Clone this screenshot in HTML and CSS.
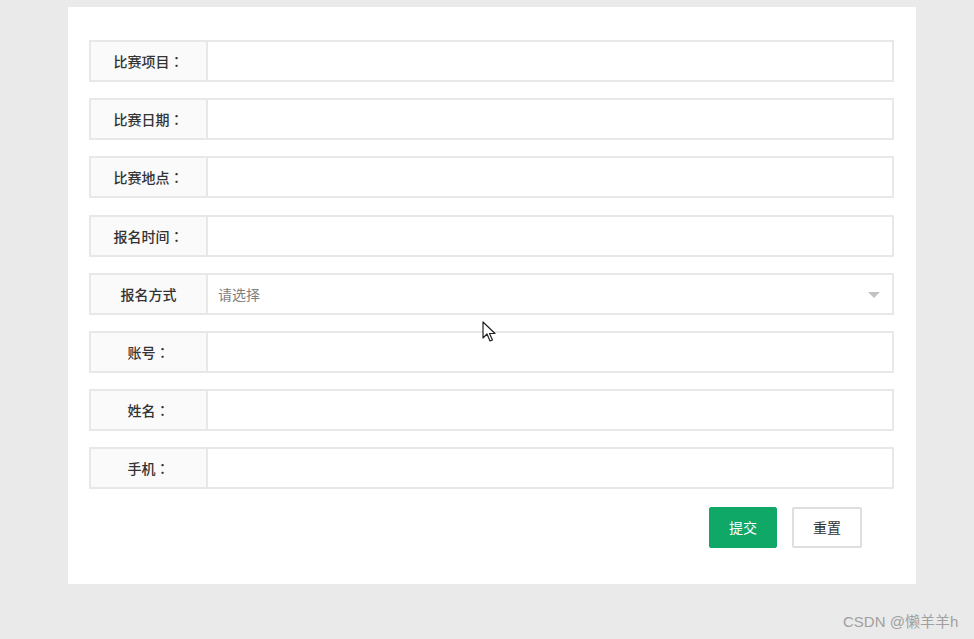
FILE: index.html
```html
<!DOCTYPE html>
<html lang="zh">
<head>
<meta charset="utf-8">
<link rel="stylesheet" href="styles.css">
</head>
<body>
<div class="panel">
  <form class="form">
    <div class="row"><label class="label">比赛项目<span class="colon">：</span></label><div class="field"></div></div>
    <div class="row"><label class="label">比赛日期<span class="colon">：</span></label><div class="field"></div></div>
    <div class="row"><label class="label">比赛地点<span class="colon">：</span></label><div class="field"></div></div>
    <div class="row"><label class="label">报名时间<span class="colon">：</span></label><div class="field"></div></div>
    <div class="row"><label class="label">报名方式</label><div class="field select"><span class="placeholder">请选择</span><span class="arrow"></span></div></div>
    <div class="row"><label class="label">账号<span class="colon">：</span></label><div class="field"></div></div>
    <div class="row"><label class="label">姓名<span class="colon">：</span></label><div class="field"></div></div>
    <div class="row"><label class="label">手机<span class="colon">：</span></label><div class="field"></div></div>
    <div class="actions">
      <button type="button" class="btn btn-primary">提交</button>
      <button type="button" class="btn btn-default">重置</button>
    </div>
  </form>
  <svg class="cursor" width="14" height="22" viewBox="0 0 14 22"><path d="M1 1 L1 17 L5 13 L8 20 L10.5 19 L7.5 12.5 L13 12.5 Z" fill="#fff" stroke="#222" stroke-width="1.2" stroke-linejoin="round"/></svg>
</div>
<div class="watermark">CSDN @懒羊羊h</div>
</body>
</html>
```

FILE: styles.css
```css
html, body {
  margin: 0;
  padding: 0;
  background: #eaeaea;
  font-family: "Noto Sans CJK SC", "Liberation Sans", sans-serif;
}
body {
  width: 974px;
  height: 639px;
  overflow: hidden;
  position: relative;
}
.panel {
  position: relative;
  margin: 7px 0 0 68px;
  width: 848px;
  height: 577px;
  background: #fff;
  box-sizing: border-box;
  padding: 33px 22px 0 21px;
}
.form {
  display: flex;
  flex-direction: column;
  gap: 16.2px;
}
.row {
  display: flex;
  height: 42px;
  box-sizing: border-box;
  border: 2px solid #e8e8e8;
}
.label {
  width: 115px;
  flex: none;
  background: #fafafa;
  border-right: 2px solid #e8e8e8;
  display: flex;
  align-items: center;
  justify-content: center;
  font-size: 14px;
  font-weight: 500;
  color: #333;
}
.colon {
  font-family: "Noto Sans CJK TC", sans-serif;
}
.field {
  flex: 1;
  background: #fff;
}
.select {
  display: flex;
  align-items: center;
  justify-content: space-between;
  padding: 0 12px 0 10px;
}
.placeholder {
  font-size: 14px;
  color: #7f7f7f;
}
.arrow {
  width: 0;
  height: 0;
  border-left: 6px solid transparent;
  border-right: 6px solid transparent;
  border-top: 6px solid #c2c2c2;
  margin-top: 2px;
}
.actions {
  display: flex;
  justify-content: flex-end;
  gap: 15px;
  padding-right: 32px;
  margin-top: 1px;
}
.btn {
  height: 41px;
  width: 68px;
  font-family: inherit;
  font-size: 14px;
  border-radius: 2px;
  cursor: pointer;
}
.btn-primary {
  background: #0fa867;
  color: #fff;
  border: 1px solid #0fa867;
}
.btn-default {
  width: 70px;
  background: #fff;
  color: #333;
  border: 2px solid #dedede;
}
.cursor {
  position: absolute;
  left: 414px;
  top: 314px;
}
.watermark {
  position: absolute;
  left: 843px;
  top: 610px;
  font-family: "Liberation Sans", "Noto Sans CJK SC", sans-serif;
  font-size: 15px;
  color: #a0a0a0;
}
```
